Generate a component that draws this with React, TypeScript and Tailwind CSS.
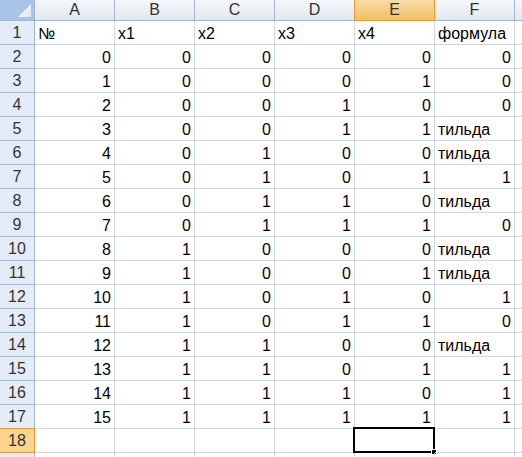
const cols = ["A", "B", "C", "D", "E", "F"];

const data: (string | number)[][] = [
  ["№", "x1", "x2", "x3", "x4", "формула"],
  [0, 0, 0, 0, 0, 0],
  [1, 0, 0, 0, 1, 0],
  [2, 0, 0, 1, 0, 0],
  [3, 0, 0, 1, 1, "тильда"],
  [4, 0, 1, 0, 0, "тильда"],
  [5, 0, 1, 0, 1, 1],
  [6, 0, 1, 1, 0, "тильда"],
  [7, 0, 1, 1, 1, 0],
  [8, 1, 0, 0, 0, "тильда"],
  [9, 1, 0, 0, 1, "тильда"],
  [10, 1, 0, 1, 0, 1],
  [11, 1, 0, 1, 1, 0],
  [12, 1, 1, 0, 0, "тильда"],
  [13, 1, 1, 0, 1, 1],
  [14, 1, 1, 1, 0, 1],
  [15, 1, 1, 1, 1, 1],
  ["", "", "", "", "", ""],
  ["", "", "", "", "", ""],
];

export default function App() {
  return (
    <div
      className="w-[522px] h-[457px] overflow-hidden bg-white text-[16px] text-black"
      style={{ fontFamily: '"Liberation Sans", Arial, sans-serif' }}
    >
      <div className="grid grid-cols-[35px_repeat(6,80px)_1fr] grid-rows-[21px_repeat(19,24px)]">
        {/* corner */}
        <div className="relative bg-[#a9c4e9] border-r border-b border-[#9eb6ce]">
          <div className="absolute right-[3px] bottom-[3px] w-[13px] h-[13px] bg-gradient-to-br from-[#ffffff] to-[#dbe6f5] [clip-path:polygon(100%_0,100%_100%,0_100%)]" />
        </div>
        {cols.map((c) => (
          <div
            key={c}
            className={
              c === "E"
                ? "flex items-center justify-center bg-gradient-to-b from-[#f9dba8] to-[#f1c15f] border-l border-r border-b border-[#f29536] -ml-px text-[#333]"
                : "flex items-center justify-center bg-gradient-to-b from-[#f6f8fb] to-[#e0e7f1] border-r border-b border-[#9eb6ce] text-[#333]"
            }
          >
            {c}
          </div>
        ))}
        <div className="bg-gradient-to-b from-[#f6f8fb] to-[#e0e7f1] border-b border-[#9eb6ce]" />

        {data.map((row, r) => {
          const n = r + 1;
          return [
            <div
              key={`h${n}`}
              className={
                n === 18
                  ? "flex items-center justify-center bg-[#fcd48c] border-r border-t border-b border-[#f29536] -mt-px text-[#333]"
                  : "flex items-center justify-center bg-[#e4ecf7] border-r border-b border-[#9eb6ce] text-[#333]"
              }
            >
              {n < 19 ? n : ""}
            </div>,
            ...row.map((v, i) => (
              <div
                key={`${n}-${i}`}
                className={`relative flex items-center px-[3px] pt-[2px] border-r border-b border-[#d0d7e5] ${
                  typeof v === "number" ? "justify-end" : "justify-start"
                }`}
              >
                {v}
                {n === 18 && i === 4 && (
                  <div className="absolute -left-[2px] -top-[2px] -right-px -bottom-px border-2 border-black">
                    <div className="absolute -right-[4px] -bottom-[4px] w-[6px] h-[6px] bg-black border border-white" />
                  </div>
                )}
              </div>
            )),
            <div key={`g${n}`} className="border-b border-[#d0d7e5]" />,
          ];
        })}
      </div>
    </div>
  );
}
